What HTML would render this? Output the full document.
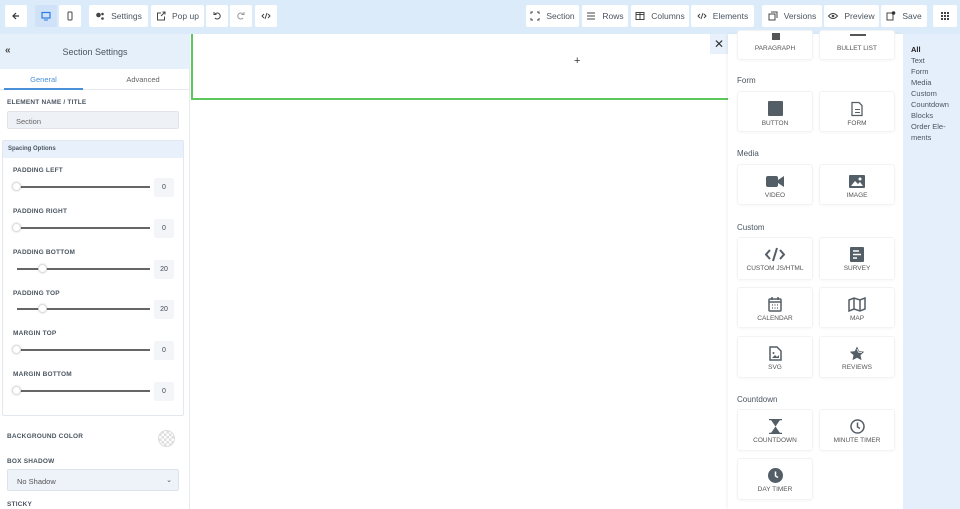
<!DOCTYPE html>
<html><head><style>
*{box-sizing:border-box;margin:0;padding:0}
body{width:960px;height:509px;overflow:hidden;background:#fff;font-family:"Liberation Sans",sans-serif;color:#3d4852;position:relative}
.a{position:absolute}
.top{left:0;top:0;width:960px;height:34px;background:#dcebfa}
.b{position:absolute;top:5px;height:22px;background:#fff;border-radius:2px;font-size:8.5px;color:#4a5560;display:flex;align-items:center;justify-content:center;gap:6px}
.b svg{width:10px;height:10px}
.lbl{font-size:6.5px;font-weight:bold;color:#4a5560;letter-spacing:.2px}
.trk{position:absolute;left:17px;width:133px;height:2px;background:#666}
.knob{position:absolute;width:9px;height:9px;border-radius:50%;background:#fff;border:1px solid #ddd;box-shadow:0 0 2px rgba(0,0,0,.2)}
.val{position:absolute;left:154px;width:20px;height:19px;background:#f3f5f8;border-radius:2px;font-size:7px;text-align:center;line-height:19px}
.card{position:absolute;width:76px;background:#fff;border:1px solid #f3f3f3;border-radius:3px;box-shadow:0 1px 2px rgba(0,0,0,.03);font-size:6.5px;color:#555;text-align:center}
.card svg{display:block;margin:0 auto}
.sec{position:absolute;left:737px;font-size:8px;color:#4a5560}
.cat{position:absolute;left:911px;font-size:7.5px;color:#4a5560;line-height:11.2px}
</style></head><body>
<div class="a top"></div>
<div class="b" style="left:5px;width:22px"><svg viewBox="0 0 10 10"><path d="M8 5H2M5 2L2 5l3 3" stroke="#333" fill="none" stroke-width="1.2"/></svg></div>
<div class="b" style="left:35px;width:22px;background:#cfe2f8"><svg viewBox="0 0 10 10"><rect x="1" y="1.5" width="8" height="5.5" fill="none" stroke="#2d7be0" stroke-width="1.2"/><path d="M3 9h4" stroke="#2d7be0"/></svg></div>
<div class="b" style="left:59px;width:22px"><svg viewBox="0 0 10 10"><rect x="3" y="1" width="4" height="8" rx=".7" fill="none" stroke="#444"/></svg></div>
<div class="b" style="left:89px;width:59px"><svg viewBox="0 0 10 10"><circle cx="3.5" cy="4" r="2.3" fill="#444"/><circle cx="7.5" cy="3" r="1.3" fill="#444"/><circle cx="7.5" cy="7.5" r="1.3" fill="#444"/></svg>Settings</div>
<div class="b" style="left:151px;width:53px"><svg viewBox="0 0 10 10"><path d="M5 2H1.5v7h7V5.5M5 5l4-4M6.5 1H9v2.5" stroke="#444" fill="none"/></svg>Pop up</div>
<div class="b" style="left:206px;width:22px"><svg viewBox="0 0 10 10"><path d="M3 3a3 3 0 1 1 0 4M2 1v2.5h2.5" stroke="#444" fill="none"/></svg></div>
<div class="b" style="left:230px;width:22px"><svg viewBox="0 0 10 10"><path d="M7 3a3 3 0 1 0 0 4M8 1v2.5H5.5" stroke="#999" fill="none"/></svg></div>
<div class="b" style="left:255px;width:22px"><svg viewBox="0 0 10 10"><path d="M3 3L1 5l2 2M7 3l2 2-2 2M6 2L4 8" stroke="#444" fill="none"/></svg></div>
<div class="b" style="left:526px;width:53px"><svg viewBox="0 0 10 10"><path d="M1 3V1h2M7 1h2v2M9 7v2H7M3 9H1V7" stroke="#444" fill="none"/></svg>Section</div>
<div class="b" style="left:582px;width:46px"><svg viewBox="0 0 10 10"><path d="M1 2h8M1 5h8M1 8h8" stroke="#444"/></svg>Rows</div>
<div class="b" style="left:631px;width:58px"><svg viewBox="0 0 10 10"><rect x="1" y="1.5" width="8" height="7" fill="none" stroke="#444"/><path d="M5 1.5v7M1 3.5h8" stroke="#444"/></svg>Columns</div>
<div class="b" style="left:691px;width:63px"><svg viewBox="0 0 10 10"><path d="M3 3L1 5l2 2M7 3l2 2-2 2M6 2L4 8" stroke="#444" fill="none"/></svg>Elements</div>
<div class="b" style="left:762px;width:60px"><svg viewBox="0 0 10 10"><rect x="1" y="3" width="6" height="6" fill="none" stroke="#444"/><path d="M3 1h6v6" stroke="#444" fill="none"/></svg>Versions</div>
<div class="b" style="left:824px;width:55px"><svg viewBox="0 0 10 10"><path d="M.5 5Q5 0 9.5 5Q5 10 .5 5Z" fill="none" stroke="#444"/><circle cx="5" cy="5" r="1.3" fill="#444"/></svg>Preview</div>
<div class="b" style="left:881px;width:46px"><svg viewBox="0 0 10 10"><rect x="1" y="2" width="6" height="7" fill="none" stroke="#444"/><circle cx="7.5" cy="2" r="1.8" fill="#333"/></svg>Save</div>
<div class="b" style="left:933px;width:24px"><svg viewBox="0 0 10 10"><path d="M1 1h2v2H1zM4 1h2v2H4zM7 1h2v2H7zM1 4h2v2H1zM4 4h2v2H4zM7 4h2v2H7zM1 7h2v2H1zM4 7h2v2H4zM7 7h2v2H7z" fill="#444"/></svg></div>

<div class="a" style="left:0;top:34px;width:190px;height:475px;background:#fff;border-right:1px solid #e6e9ee"></div>
<div class="a" style="left:0;top:34px;width:190px;height:35px;background:#e6f0fb"></div>
<div class="a" style="left:5px;top:45px;font-size:10px;color:#444;font-weight:bold">«</div>
<div class="a" style="left:0;top:47px;width:190px;text-align:center;font-size:9px;color:#4a5560">Section Settings</div>
<div class="a" style="left:0;top:89px;width:190px;height:1px;background:#e6e9ee"></div>
<div class="a" style="left:4px;top:75px;width:79px;text-align:center;font-size:7.5px;color:#4a90d9">General</div>
<div class="a" style="left:4px;top:88px;width:79px;height:2px;background:#4a90d9"></div>
<div class="a" style="left:100px;top:75px;width:86px;text-align:center;font-size:7.5px;color:#666">Advanced</div>
<div class="a lbl" style="left:7px;top:99px">ELEMENT NAME / TITLE</div>
<div class="a" style="left:7px;top:111px;width:172px;height:18px;background:#eef1f6;border:1px solid #e0e4ea;border-radius:2px;font-size:7.5px;color:#666;padding:5px 0 0 8px">Section</div>
<div class="a" style="left:2px;top:140px;width:182px;height:276px;border:1px solid #e3e8ef;border-radius:2px"></div>
<div class="a" style="left:3px;top:141px;width:180px;height:17px;background:#e8f1fb;font-size:6px;font-weight:bold;color:#4a5560;padding:5px 0 0 5px">Spacing Options</div>

<div class="a lbl" style="left:13px;top:167px">PADDING LEFT</div><div class="trk" style="top:186px"></div><div class="knob" style="left:12px;top:182px"></div><div class="val" style="top:178px">0</div>
<div class="a lbl" style="left:13px;top:208px">PADDING RIGHT</div><div class="trk" style="top:227px"></div><div class="knob" style="left:12px;top:223px"></div><div class="val" style="top:219px">0</div>
<div class="a lbl" style="left:13px;top:249px">PADDING BOTTOM</div><div class="trk" style="top:268px"></div><div class="knob" style="left:38px;top:264px"></div><div class="val" style="top:260px">20</div>
<div class="a lbl" style="left:13px;top:290px">PADDING TOP</div><div class="trk" style="top:308px"></div><div class="knob" style="left:38px;top:304px"></div><div class="val" style="top:300px">20</div>
<div class="a lbl" style="left:13px;top:330px">MARGIN TOP</div><div class="trk" style="top:349px"></div><div class="knob" style="left:12px;top:345px"></div><div class="val" style="top:341px">0</div>
<div class="a lbl" style="left:13px;top:371px">MARGIN BOTTOM</div><div class="trk" style="top:390px"></div><div class="knob" style="left:12px;top:386px"></div><div class="val" style="top:382px">0</div>

<div class="a lbl" style="left:7px;top:433px">BACKGROUND COLOR</div>
<div class="a" style="left:158px;top:430px;width:17px;height:17px;border-radius:50%;border:1px solid #ddd;background:repeating-conic-gradient(#ddd 0 25%,#fff 0 50%) 0 0/5px 5px"></div>
<div class="a lbl" style="left:7px;top:458px">BOX SHADOW</div>
<div class="a" style="left:7px;top:469px;width:172px;height:22px;background:#eef3fa;border:1px solid #dde3ea;border-radius:2px;font-size:7.5px;color:#555;padding:7px 0 0 9px">No Shadow<span style="position:absolute;right:6px;top:6px;font-size:7px">⌄</span></div>
<div class="a lbl" style="left:7px;top:501px">STICKY</div>

<div class="a" style="left:191px;top:34px;width:537px;height:66px;border-left:2px solid #5cc85c;border-bottom:2px solid #5cc85c"></div>
<div class="a" style="left:574px;top:55px;font-size:11px;color:#333">+</div>
<div class="a" style="left:710px;top:34px;width:18px;height:20px;background:#e8f1fb;font-size:12px;color:#333;text-align:center;line-height:20px">✕</div>

<div class="a" style="left:728px;top:34px;width:175px;height:475px;background:#fff;box-shadow:-1px 0 3px rgba(0,0,0,.06)"></div>
<div class="a" style="left:903px;top:34px;width:57px;height:475px;background:#e5effc"></div>
<div class="cat" style="top:44px;font-weight:bold;color:#222">All</div>
<div class="cat" style="top:55px">Text</div><div class="cat" style="top:66px">Form</div><div class="cat" style="top:77px">Media</div><div class="cat" style="top:88px">Custom</div><div class="cat" style="top:99px">Countdown</div><div class="cat" style="top:110px">Blocks</div><div class="cat" style="top:121px;width:40px">Order Ele-ments</div>

<div class="card" style="left:737px;top:30px;height:30px;padding-top:14px"><div style="position:absolute;left:34px;top:2px;width:8px;height:7px;background:#555"></div>PARAGRAPH</div>
<div class="card" style="left:819px;top:30px;height:30px;padding-top:14px"><div style="position:absolute;left:30px;top:3px;width:16px;height:2px;background:#555"></div>BULLET LIST</div>

<div class="sec" style="top:76px">Form</div>
<div class="card" style="left:737px;top:91px;height:41px;padding-top:9px"><svg width="15" height="15"><rect width="15" height="15" rx="1" fill="#545e66"/></svg><div style="margin-top:4px">BUTTON</div></div>
<div class="card" style="left:819px;top:91px;height:41px;padding-top:9px"><svg width="14" height="16" viewBox="0 0 14 15"><path d="M2 1h7l3 3v10H2z" fill="none" stroke="#545e66" stroke-width="1.3"/><path d="M5 8h5M5 11h5" stroke="#545e66"/></svg><div style="margin-top:3px">FORM</div></div>

<div class="sec" style="top:149px">Media</div>
<div class="card" style="left:737px;top:164px;height:41px;padding-top:10px"><svg width="18" height="13" viewBox="0 0 18 13"><rect x="0" y="1" width="12" height="11" rx="2" fill="#545e66"/><path d="M12 5l6-4v11l-6-4z" fill="#545e66"/></svg><div style="margin-top:4px">VIDEO</div></div>
<div class="card" style="left:819px;top:164px;height:41px;padding-top:10px"><svg width="16" height="13" viewBox="0 0 16 13"><rect x="0" y="0" width="16" height="13" rx="1" fill="#545e66"/><path d="M2 11l4-5 3 3 2-2 3 4z" fill="#fff"/><circle cx="11" cy="4" r="1.5" fill="#fff"/></svg><div style="margin-top:4px">IMAGE</div></div>

<div class="sec" style="top:223px">Custom</div>
<div class="card" style="left:737px;top:237px;height:43px;padding-top:9px"><svg width="20" height="15" viewBox="0 0 20 15"><path d="M5 3L1 7.5 5 12M15 3l4 4.5-4 4.5M12 1L8 14" stroke="#545e66" stroke-width="2" fill="none"/></svg><div style="margin-top:3px">CUSTOM JS/HTML</div></div>
<div class="card" style="left:819px;top:237px;height:43px;padding-top:9px"><svg width="14" height="15" viewBox="0 0 14 15"><rect width="14" height="15" rx="1" fill="#545e66"/><path d="M3 4h6M3 7.5h8M3 11h4" stroke="#fff" stroke-width="1.5"/></svg><div style="margin-top:3px">SURVEY</div></div>
<div class="card" style="left:737px;top:287px;height:41px;padding-top:9px"><svg width="14" height="15" viewBox="0 0 14 15"><rect x="1" y="2" width="12" height="12" rx="1" fill="none" stroke="#545e66" stroke-width="1.5"/><path d="M1 5h12M4 0v3M10 0v3" stroke="#545e66" stroke-width="1.5"/><path d="M4 8h1M6.5 8h1M9 8h1M4 11h1M6.5 11h1M9 11h1" stroke="#545e66" stroke-width="1.3"/></svg><div style="margin-top:3px">CALENDAR</div></div>
<div class="card" style="left:819px;top:287px;height:41px;padding-top:9px"><svg width="18" height="15" viewBox="0 0 18 15"><path d="M1 3l5-2 6 2 5-2v11l-5 2-6-2-5 2z M6 1v11M12 3v11" fill="none" stroke="#545e66" stroke-width="1.5"/></svg><div style="margin-top:3px">MAP</div></div>
<div class="card" style="left:737px;top:336px;height:42px;padding-top:9px"><svg width="13" height="15" viewBox="0 0 13 15"><path d="M1 1h7l4 4v9H1z" fill="none" stroke="#545e66" stroke-width="1.5"/><path d="M3 12l3-3 2 2 2-2v3z" fill="#545e66"/><circle cx="4.5" cy="7" r="1" fill="#545e66"/></svg><div style="margin-top:3px">SVG</div></div>
<div class="card" style="left:819px;top:336px;height:42px;padding-top:9px"><svg width="16" height="15" viewBox="0 0 16 15"><path d="M8 .5l2.2 4.6 5 .6-3.7 3.4 1 5L8 11.7 3.5 14.1l1-5L.8 5.7l5-.6z" fill="#545e66"/><path d="M8 3l1.5 3.2 3.4.4" stroke="#fff" fill="none" stroke-width=".8"/></svg><div style="margin-top:3px">REVIEWS</div></div>

<div class="sec" style="top:395px">Countdown</div>
<div class="card" style="left:737px;top:409px;height:42px;padding-top:9px"><svg width="13" height="15" viewBox="0 0 13 15"><path d="M0 .5h13M0 14.5h13" stroke="#545e66" stroke-width="1.6"/><path d="M2 1h9L6.5 7.5 11 14H2l4.5-6.5z" fill="#545e66"/></svg><div style="margin-top:3px">COUNTDOWN</div></div>
<div class="card" style="left:819px;top:409px;height:42px;padding-top:9px"><svg width="15" height="15" viewBox="0 0 15 15"><circle cx="7.5" cy="7.5" r="6.5" fill="none" stroke="#545e66" stroke-width="1.5"/><path d="M7.5 3.5v4.5l2.5 1.5" stroke="#545e66" stroke-width="1.5" fill="none"/></svg><div style="margin-top:3px">MINUTE TIMER</div></div>
<div class="card" style="left:737px;top:458px;height:42px;padding-top:9px"><svg width="15" height="15" viewBox="0 0 15 15"><circle cx="7.5" cy="7.5" r="7.5" fill="#545e66"/><path d="M7.5 3.5v4.5l2.5 1.5" stroke="#fff" stroke-width="1.5" fill="none"/></svg><div style="margin-top:3px">DAY TIMER</div></div>
</body></html>
